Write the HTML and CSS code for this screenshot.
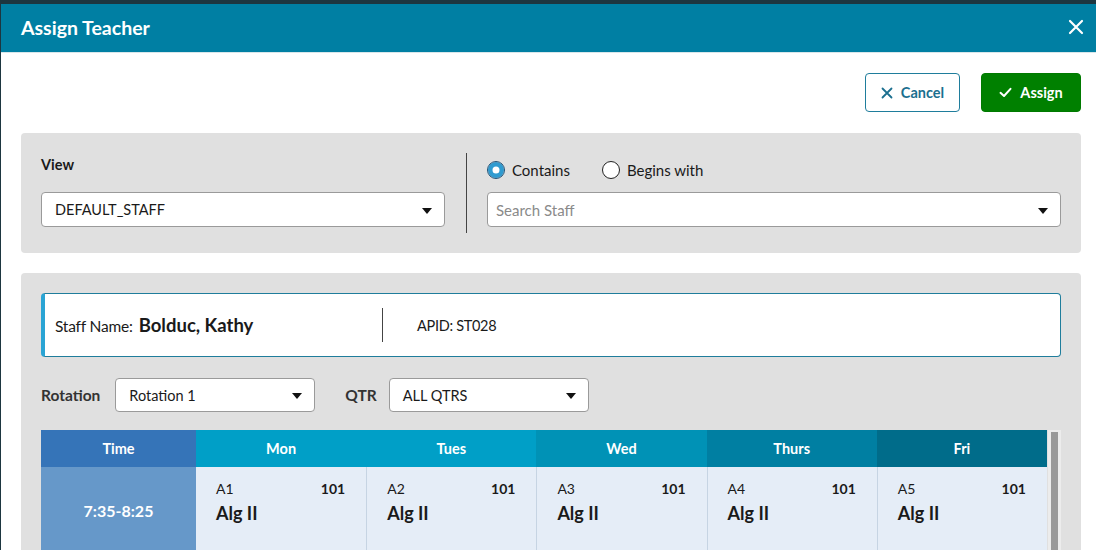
FILE: index.html
```html
<!DOCTYPE html>
<html>
<head>
<meta charset="utf-8">
<link rel="stylesheet" href="styles.css">
</head>
<body>
<div class="backdrop">
  <div class="modal">
    <div class="modal-header">
      <h1 class="modal-title">Assign Teacher</h1>
      <button class="close-btn" aria-label="Close">
        <svg width="16" height="16" viewBox="0 0 16 16"><path d="M2 2 L14 14 M14 2 L2 14" stroke="#fff" stroke-width="2.2" stroke-linecap="round"/></svg>
      </button>
    </div>
    <div class="modal-body">
      <div class="actions">
        <button class="btn btn-outline">
          <svg width="12" height="12" viewBox="0 0 12 12"><path d="M1.5 1.5 L10.5 10.5 M10.5 1.5 L1.5 10.5" stroke="currentColor" stroke-width="1.8" stroke-linecap="round"/></svg>
          Cancel
        </button>
        <button class="btn btn-primary">
          <svg width="13" height="11" viewBox="0 0 13 11"><path d="M1.5 5.8 L5 9 L11.5 1.8" stroke="#fff" stroke-width="2" fill="none" stroke-linecap="round" stroke-linejoin="round"/></svg>
          Assign
        </button>
      </div>

      <div class="panel filter-panel">
        <div class="filter-left">
          <div class="field-label">View</div>
          <div class="select select-wide"><span>DEFAULT_STAFF</span><span class="caret"></span></div>
        </div>
        <div class="vdivider"></div>
        <div class="filter-right">
          <div class="radios">
            <label class="radio"><span class="radio-dot checked"></span>Contains</label>
            <label class="radio"><span class="radio-dot"></span>Begins with</label>
          </div>
          <div class="select select-wide select-search"><span class="placeholder">Search Staff</span><span class="caret"></span></div>
        </div>
      </div>

      <div class="panel detail-panel">
        <div class="staff-card">
          <div class="staff-name"><span class="lbl">Staff Name:</span><span class="name">Bolduc, Kathy</span></div>
          <div class="card-divider"></div>
          <div class="apid">APID: ST028</div>
        </div>

        <div class="options-row">
          <span class="opt-label">Rotation</span>
          <div class="select select-small"><span>Rotation 1</span><span class="caret"></span></div>
          <span class="opt-label opt-gap">QTR</span>
          <div class="select select-small"><span>ALL QTRS</span><span class="caret"></span></div>
        </div>

        <div class="schedule-wrap">
          <div class="schedule">
            <div class="th th-time">Time</div>
            <div class="th th-mon">Mon</div>
            <div class="th th-tue">Tues</div>
            <div class="th th-wed">Wed</div>
            <div class="th th-thu">Thurs</div>
            <div class="th th-fri">Fri</div>

            <div class="td-time">7:35-8:25</div>
            <div class="td"><div class="cell-top"><span>A1</span><b>101</b></div><div class="course">Alg II</div></div>
            <div class="td"><div class="cell-top"><span>A2</span><b>101</b></div><div class="course">Alg II</div></div>
            <div class="td"><div class="cell-top"><span>A3</span><b>101</b></div><div class="course">Alg II</div></div>
            <div class="td"><div class="cell-top"><span>A4</span><b>101</b></div><div class="course">Alg II</div></div>
            <div class="td"><div class="cell-top"><span>A5</span><b>101</b></div><div class="course">Alg II</div></div>
          </div>
          <div class="scrollbar"><div class="thumb"></div></div>
        </div>
      </div>
    </div>
  </div>
</div>
</body>
</html>
```

FILE: styles.css
```css
* { box-sizing: border-box; }
html, body { margin: 0; padding: 0; }
body {
  width: 1096px;
  height: 550px;
  overflow: hidden;
  background: #1d3640;
  font-family: "Lato", "Open Sans", sans-serif;
  color: #1a1a1a;
}
.backdrop {
  padding-top: 4px;
  padding-left: 1px;
  height: 550px;
  overflow: hidden;
}
.modal {
  background: #fff;
  height: 100%;
  overflow: hidden;
}
.modal-header {
  height: 49px;
  background: #007fa3;
  border-bottom: 1px solid #d8e6ea;
  display: flex;
  align-items: center;
  justify-content: space-between;
  padding: 0 12px 0 20px;
}
.modal-title {
  margin: 0;
  color: #fff;
  font-size: 19.5px;
  font-weight: 700;
  margin-top: -2px;
}
.close-btn {
  background: none;
  border: 0;
  padding: 0;
  display: flex;
  margin-top: -3px;
}
.modal-body {
  padding: 20px 15px 0 20px;
}
.actions {
  display: flex;
  justify-content: flex-end;
  gap: 21px;
  margin-bottom: 21px;
}
.btn {
  height: 39px;
  border-radius: 4px;
  font-family: inherit;
  font-size: 14.5px;
  font-weight: 700;
  display: flex;
  align-items: center;
  justify-content: center;
  gap: 8px;
}
.btn-outline {
  width: 95px;
  background: #fff;
  border: 1px solid #1f7d9c;
  color: #1b6f8f;
}
.btn-primary {
  width: 100px;
  background: #008000;
  border: 1px solid #007a00;
  color: #fff;
}
.panel {
  background: #e0e0e0;
  border-radius: 4px;
  padding: 20px;
}
.filter-panel {
  height: 120px;
  display: flex;
  margin-bottom: 20px;
}
.filter-left { width: 404px; padding-top: 4px; }
.field-label {
  font-size: 14.5px;
  font-weight: 700;
  height: 16px;
  line-height: 16px;
  margin-bottom: 19px;
}
.vdivider {
  width: 1px;
  background: #444;
  margin: 0 20px 0 21px;
  height: 80px;
}
.filter-right { flex: 1; padding-top: 8px; }
.radios {
  display: flex;
  gap: 32px;
  margin-bottom: 13px;
  height: 18px;
}
.radio {
  display: flex;
  align-items: center;
  gap: 7px;
  font-size: 15px;
}
.radio-dot {
  width: 18px;
  height: 18px;
  border-radius: 50%;
  border: 1.5px solid #222;
  background: #fff;
  display: inline-block;
}
.radio-dot.checked {
  border-color: #1d4f74;
  box-shadow: inset 0 0 0 4.5px #2f9bd0, inset 0 0 0 9px #fff;
  background: #fff;
}
.select {
  height: 35px;
  background: #fff;
  border: 1px solid #9a9a9a;
  border-radius: 4px;
  display: flex;
  align-items: center;
  justify-content: space-between;
  padding: 0 12px 0 13px;
  font-size: 14.5px;
}
.select-wide { width: 100%; }
.select-search { padding-left: 8px; }
.placeholder { color: #8a8a8a; font-size: 15px; }
.caret {
  width: 0;
  height: 0;
  border-left: 5px solid transparent;
  border-right: 5px solid transparent;
  border-top: 6px solid #111;
  margin-top: 2px;
}
.detail-panel { padding-bottom: 40px; }
.staff-card {
  height: 64px;
  background: #fff;
  border: 1px solid #1f7d9c;
  border-left: 4px solid #2aa4d4;
  border-radius: 4px;
  display: flex;
  align-items: center;
  padding-left: 10px;
}
.staff-name {
  width: 327px;
  display: flex;
  align-items: baseline;
  gap: 6px;
}
.lbl { font-size: 15.5px; letter-spacing: -0.2px; }
.name { font-size: 18.5px; font-weight: 700; }
.card-divider {
  width: 1px;
  height: 34px;
  background: #444;
  margin-right: 34px;
}
.apid { font-size: 14.5px; letter-spacing: -0.3px; }
.options-row {
  display: flex;
  align-items: center;
  margin-top: 21px;
  margin-bottom: 18px;
}
.opt-label {
  font-size: 15.5px;
  font-weight: 700;
  color: #333;
  margin-right: 15px;
}
.opt-gap { margin-left: 30px; margin-right: 12px; }
.select-small { width: 200px; height: 34px; }
.schedule-wrap {
  display: flex;
}
.schedule {
  width: 1006px;
  display: grid;
  grid-template-columns: 155px repeat(5, 1fr);
  grid-template-rows: 37px 90px;
}
.th {
  color: #fff;
  font-weight: 700;
  font-size: 14.5px;
  display: flex;
  align-items: center;
  justify-content: center;
}
.th-time { background: #3574b8; }
.th-mon, .th-tue { background: #009fc7; }
.th-wed { background: #0092b6; }
.th-thu { background: #007fa2; }
.th-fri { background: #006c8a; }
.td-time {
  background: #6698c9;
  color: #fff;
  font-weight: 700;
  font-size: 16px;
  display: flex;
  justify-content: center;
  padding-top: 34px;
}
.td {
  background: #e5edf7;
  border-left: 1px solid #c6d4e3;
  padding: 14px 21px 0 20px;
}
.td:nth-child(8) { border-left: 0; }
.cell-top {
  display: flex;
  justify-content: space-between;
  font-size: 14px;
  line-height: 16px;
}
.cell-top b { font-weight: 700; }
.course {
  font-size: 18px;
  font-weight: 700;
  margin-top: 5px;
}
.scrollbar {
  width: 13px;
  background: #ececec;
  padding: 2px 3px 0 3px;
  margin-left: 1px;
}
.thumb {
  background: #999;
  height: 200px;
}
```
